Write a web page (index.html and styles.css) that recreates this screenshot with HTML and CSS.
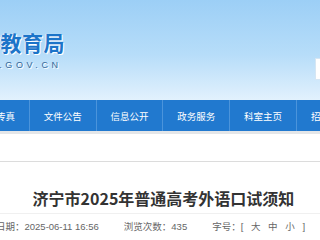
FILE: index.html
```html
<!DOCTYPE html>
<html lang="zh-CN">
<head>
    <meta charset="UTF-8">
    <meta name="viewport" content="width=device-width, initial-scale=1.0">
    <title>济宁市2025年普通高考外语口试须知</title>
    <link rel="stylesheet" href="styles.css">
</head>
<body>
    <header class="top">
        <div class="logo">
            <div class="logo-name">济宁市教育局</div>
            <div class="logo-url">JN.GOV.CN</div>
        </div>
        <div class="search">
            <span class="search-text">F</span>
        </div>
    </header>

    <nav class="nav">
        <a class="nav-item">教育传真</a>
        <a class="nav-item">文件公告</a>
        <a class="nav-item">信息公开</a>
        <a class="nav-item">政务服务</a>
        <a class="nav-item">科室主页</a>
        <a class="nav-item">招生考试</a>
    </nav>
    <div class="nav-shadow"></div>

    <main class="article">
        <h1 class="title">济宁市2025年普通高考外语口试须知</h1>
        <div class="meta">
            <span class="meta-item">发布日期：2025-06-11 16:56</span>
            <span class="meta-item">浏览次数：435</span>
            <span class="meta-item">字号：<span class="size-links">[ 大 中 小 ]</span></span>
        </div>
    </main>
</body>
</html>
```

FILE: styles.css
```css
html, body {
    margin: 0;
    padding: 0;
    width: 320px;
    overflow: hidden;
    background-color: #ffffff;
    font-family: "Liberation Sans", "Noto Sans CJK SC", sans-serif;
}
.top {
    height: 100px;
    display: flex;
    justify-content: space-between;
    align-items: flex-start;
    background: linear-gradient(to bottom, #9ccff6 0%, #b7ddf9 55%, #e2f1fd 100%);
}
.logo {
    margin-left: -64px;
    padding-top: 30px;
}
.logo-name {
    font-family: "Noto Sans CJK SC", sans-serif;
    font-size: 21px;
    font-weight: bold;
    line-height: 24px;
    letter-spacing: 0.5px;
    color: #1c74c9;
    text-shadow: 1px 1px 0 #ffffff, -1px 0 1px rgba(255, 255, 255, 0.7);
}
.logo-url {
    margin-top: 6px;
    margin-left: 45px;
    font-size: 9px;
    line-height: 10px;
    letter-spacing: 3.6px;
    color: #35689a;
    text-shadow: 1px 1px 0 #ffffff;
}
.search {
    margin-top: 58px;
    margin-right: -40px;
    width: 45px;
    height: 22px;
    background-color: #ffffff;
    border: 1px solid #d6e6f3;
    box-sizing: border-box;
    display: flex;
    align-items: center;
    padding-left: 4px;
}
.search-text {
    font-size: 11px;
    color: #777;
}
.nav {
    display: flex;
    height: 31px;
    margin-left: -37px;
    background-color: #2179cf;
}
.nav-item {
    flex: 0 0 66.8px;
    display: flex;
    align-items: center;
    justify-content: center;
    border-right: 1px solid #4b94db;
    box-sizing: border-box;
    font-family: "Noto Sans CJK SC", sans-serif;
    font-size: 9.5px;
    color: #ffffff;
    text-decoration: none;
}
.nav-shadow {
    height: 3px;
    background-color: #e4e6e8;
}
.article {
    border-top: 1px solid #dcdcdc;
    margin-top: 27px;
}
.title {
    margin: 26px 0 0 7px;
    text-align: center;
    font-family: "Noto Sans CJK SC", sans-serif;
    font-size: 16px;
    line-height: 20px;
    font-weight: bold;
    color: #333333;
}
.meta {
    margin-top: 5px;
    border-top: 1px solid #f0f0f0;
    padding-top: 7px;
    display: flex;
    gap: 25px;
    margin-left: -23px;
    white-space: nowrap;
}
.meta-item {
    font-family: "Liberation Sans", "Noto Sans CJK SC", sans-serif;
    font-size: 9.5px;
    line-height: 12px;
    color: #666666;
}
.size-links {
    word-spacing: 5px;
}
```
